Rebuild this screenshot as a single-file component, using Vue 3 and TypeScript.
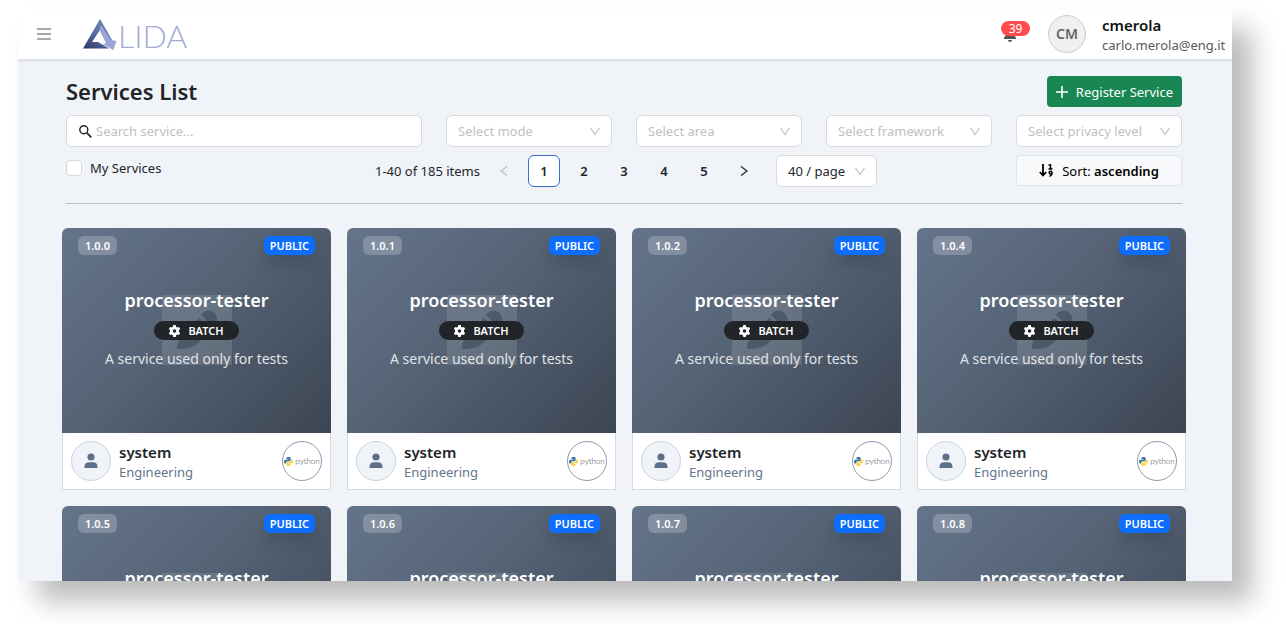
<script setup lang="ts">
import { ref } from 'vue'

interface Service {
  version: string
  name: string
  mode: string
  description: string
  owner: string
  organization: string
}

const services: Service[] = ['1.0.0', '1.0.1', '1.0.2', '1.0.4', '1.0.5', '1.0.6', '1.0.7', '1.0.8'].map((version) => ({
  version,
  name: 'processor-tester',
  mode: 'BATCH',
  description: 'A service used only for tests',
  owner: 'system',
  organization: 'Engineering',
}))

const filters = [
  { id: 'mode', label: 'Select mode' },
  { id: 'area', label: 'Select area' },
  { id: 'framework', label: 'Select framework' },
  { id: 'privacy', label: 'Select privacy level' },
]

const pages = [1, 2, 3, 4, 5]
const page = ref(1)
const search = ref('')
const mine = ref(false)
</script>

<template>
  <div class="desktop">
  <div class="window">
    <header class="topbar">
      <button class="menu" type="button" aria-label="Menu">
        <svg width="14" height="12" viewBox="0 0 14 12"><path d="M0 1h14M0 6h14M0 11h14" stroke="#8c8c8c" stroke-width="1.6" /></svg>
      </button>
      <a class="brand" href="#" aria-label="ALIDA">
        <svg width="34" height="31" viewBox="0 0 34 31">
          <defs>
            <linearGradient id="brand-dark" x1="0.7" y1="0" x2="0.1" y2="1">
              <stop offset="0" stop-color="#7383bd" />
              <stop offset="0.5" stop-color="#5969a4" />
              <stop offset="1" stop-color="#2f3b69" />
            </linearGradient>
          </defs>
          <path d="M17 0L29 21H24L17 11L9 23H15L26 29.5H0Z" fill="url(#brand-dark)" />
          <path d="M18 6L28 21L33.5 22L30.5 31L20 25.500L23 24L16.5 11Z" fill="#9aa6d6" />
        </svg>
        <span class="brand-text">LIDA</span>
      </a>
      <button class="bell" type="button" aria-label="Notifications">
        <svg width="14" height="16" viewBox="0 0 14 16"><path d="M7 0a1 1 0 0 1 1 1v.6A4.500 4.500 0 0 1 11.500 6v4L13 11.500V13H1v-1.500L2.500 10V6A4.500 4.500 0 0 1 6 1.600V1a1 1 0 0 1 1-1zM5 14h4a2 2 0 0 1-4 0z" fill="#555" /></svg>
        <span class="count">39</span>
      </button>
      <span class="initials">CM</span>
      <div class="account">
        <strong>cmerola</strong>
        <span>carlo.merola@eng.it</span>
      </div>
    </header>

    <main>
      <div class="heading">
        <h1>Services List</h1>
        <button class="register" type="button">
          <svg width="12" height="12" viewBox="0 0 12 12"><path d="M6 0v12M0 6h12" stroke="#fff" stroke-width="1.6" /></svg>
          Register Service
        </button>
      </div>

      <div class="filters">
        <label class="search">
          <svg width="13" height="13" viewBox="0 0 13 13" fill="none" stroke="#212529"><circle cx="4.800" cy="4.800" r="4" stroke-width="1.400" /><path d="M7.800 7.800L12.300 12.300" stroke-width="1.800" /></svg>
          <input v-model="search" type="text" placeholder="Search service..." aria-label="Search service" />
        </label>
        <label v-for="f in filters" :key="f.id" class="select">
          <select :aria-label="f.label"><option>{{ f.label }}</option></select>
          <svg width="12" height="9" viewBox="0 0 12 9"><path d="M1.500 1L6 7.500L10.500 1" fill="none" stroke="#bfbfbf" stroke-width="1.200" /></svg>
        </label>
      </div>

      <div class="controls">
        <label class="mine"><input v-model="mine" type="checkbox" />My Services</label>
        <nav class="pagination" aria-label="Pagination">
          <span class="total">1-40 of 185 items</span>
          <button type="button" disabled aria-label="Previous page">
            <svg width="8" height="12" viewBox="0 0 8 12"><path d="M7 1.500L1 6L7 10.500" fill="none" stroke="#bfbfbf" stroke-width="1.200" /></svg>
          </button>
          <button v-for="p in pages" :key="p" type="button" :class="{ current: p === page }" @click="page = p">{{ p }}</button>
          <button type="button" aria-label="Next page">
            <svg width="8" height="12" viewBox="0 0 8 12"><path d="M1 1.500L7 6L1 10.500" fill="none" stroke="#222" stroke-width="1.200" /></svg>
          </button>
          <label class="select size">
            <select aria-label="Page size"><option>40 / page</option></select>
            <svg width="12" height="9" viewBox="0 0 12 9"><path d="M1.500 1L6 7.500L10.500 1" fill="none" stroke="#bfbfbf" stroke-width="1.200" /></svg>
          </label>
        </nav>
        <button class="sort" type="button">
          <svg width="15" height="13" viewBox="0 0 15 13" fill="none" stroke="#000">
            <path d="M4 0V11M0.800 8L4 11.500L7.200 8" stroke-width="1.800" />
            <path d="M9.500 1.200L11.500 0.800V5M9.500 5H13.500" stroke-width="1.500" />
            <circle cx="11.500" cy="8.600" r="1.400" stroke-width="1.500" />
            <path d="M13 8.600C13 11 12 12 10.500 12.300" stroke-width="1.500" />
          </svg>
          <span>Sort: <b>ascending</b></span>
        </button>
      </div>
    </main>

    <section class="cards">
      <article v-for="s in services" :key="s.version" class="card">
        <div class="cover">
          <svg class="art" width="70" height="70" viewBox="0 0 70 70">
            <rect width="70" height="70" fill="#fff" fill-opacity="0.120" />
            <g fill="#333f50" fill-opacity="0.500">
              <path d="M15 54C15 46 18 41 24 37L37 23L51 36L38 46C33 53 24 54 15 54Z" />
              <path d="M39 20C43 14 50 14 54 20C57 26 55 31 53 34Z" />
            </g>
          </svg>
          <div class="badges">
            <span class="badge version">{{ s.version }}</span>
            <span class="badge public">PUBLIC</span>
          </div>
          <div class="summary">
            <h2>{{ s.name }}</h2>
            <span class="mode">
              <svg width="11" height="12" viewBox="0 0 11 12">
                <path fill="#fff" fill-rule="evenodd" d="M4.300 0h2.400l.4 1.700 1.300.7L10 1.900l1.100 2L9.900 5.200v1.600l1.200 1.300-1.100 2-1.600-.5-1.300.7-.4 1.700H4.300l-.4-1.700-1.300-.7-1.600.5-1.100-2 1.200-1.300V5.200L-.1 3.900l1.100-2 1.600.5 1.300-.7zM5.500 4.200a1.800 1.800 0 1 0 0 3.600 1.800 1.800 0 0 0 0-3.600z" />
              </svg>
              {{ s.mode }}
            </span>
            <p>{{ s.description }}</p>
          </div>
        </div>
        <footer>
          <span class="avatar">
            <svg width="14" height="16" viewBox="0 0 14 16" fill="#5c708a"><circle cx="7" cy="4" r="3.600" /><path d="M0.500 15V13.500C0.500 10.800 2.500 9.300 5 9.300H9C11.500 9.300 13.500 10.800 13.500 13.500V15Z" /></svg>
          </span>
          <div class="owner">
            <strong>{{ s.owner }}</strong>
            <span>{{ s.organization }}</span>
          </div>
          <span class="python">
            <svg width="9" height="9" viewBox="0 0 18 18">
              <path d="M9 0C5.500 0 5 1 5 3V4.500H9.500V5.500H3C1 5.500 0 7 0 9.500S1 13 3 13H4.500V11C4.500 9 6 8.300 7 8.300H11C12.500 8.300 13.300 7 13.300 6V3C13.300 1 12 0 9 0Z" fill="#3572a5" />
              <path d="M9 18C12.500 18 13 17 13 15V13.500H8.500V12.500H15C17 12.500 18 11 18 8.500S17 5 15 5H14.300V7C14.300 9 12.500 9.500 11.500 9.500H7.500C6 9.500 5 10.500 5 12V15C5 17 6 18 9 18Z" fill="#ffd43b" />
            </svg>
            python
          </span>
        </footer>
      </article>
    </section>
  </div>
  </div>
</template>

<style>
body {
  margin: 0;
  background: #fff;
}
</style>

<style scoped>
* {
  box-sizing: border-box;
}

.desktop {
  height: 100vh;
  padding: 9px 54px 43px 18px;
  overflow: hidden;
}

.window {
  height: 100%;
  overflow: hidden;
  background: #f0f3f8;
  box-shadow: 20px 20px 26px rgba(0, 0, 0, 0.27);
  color: #212529;
  font-family: "Noto Sans", "Open Sans", sans-serif;
  font-size: 13px;
  line-height: 20px;
}

button,
input,
select {
  font: inherit;
  color: inherit;
}

button {
  display: flex;
  align-items: center;
  justify-content: center;
  padding: 0;
  border: 0;
  background: none;
}

svg {
  flex: none;
  display: block;
}

.topbar {
  position: relative;
  display: flex;
  align-items: center;
  height: 50px;
  padding: 0 6px 0 18px;
  background: #fff;
  box-shadow: 0 1px 4px rgba(0, 21, 41, 0.16);
}

.menu {
  width: 16px;
  height: 16px;
}

.brand {
  display: flex;
  align-items: center;
  margin-left: 31px;
  gap: 1px;
  margin-right: auto;
  text-decoration: none;
}

.brand-text {
  padding-top: 4px;
  color: #a3abd2;
  font-family: Lato, sans-serif;
  font-size: 32px;
  font-weight: 300;
  line-height: 30px;
}

.bell {
  position: relative;
  margin-right: 31px;
}

.count {
  position: absolute;
  top: -5px;
  left: -2px;
  width: 29px;
  border-radius: 8px;
  background: #ff4d4f;
  color: #fff;
  font-size: 12px;
  line-height: 15px;
}

.initials {
  display: grid;
  place-items: center;
  width: 38px;
  height: 38px;
  border: 1px solid #ccc;
  border-radius: 50%;
  background: #f0f0f0;
  color: #666;
  font-size: 14px;
  font-weight: 600;
}

.account {
  display: flex;
  flex-direction: column;
  min-width: 124px;
  margin-left: 16px;
  padding-top: 2px;
}

.account strong {
  color: #111;
  font-size: 15px;
  font-weight: 600;
}

.account span {
  color: #595959;
}

main {
  margin: 17px 50px 0 48px;
  padding-bottom: 16px;
  border-bottom: 1px solid #b8bdc6;
}

.heading {
  display: flex;
  align-items: center;
  justify-content: space-between;
}

h1 {
  margin: 0;
  font-size: 22px;
  font-weight: 600;
  line-height: 31px;
}

.register {
  gap: 8px;
  height: 31px;
  padding: 0 9px;
  border-radius: 4px;
  background: #198754;
  color: #fff;
}

.filters {
  display: grid;
  grid-template-columns: repeat(6, 1fr);
  gap: 24px;
  margin-top: 8px;
}

.search,
.select {
  display: flex;
  align-items: center;
  height: 32px;
  border: 1px solid #d9d9d9;
  border-radius: 6px;
  background: #fff;
}

.search {
  grid-column: span 2;
  gap: 4px;
  padding: 0 12px;
}

.search input {
  flex: 1;
  min-width: 0;
  padding: 0;
  border: 0;
  outline: 0;
  background: none;
}

.search input::placeholder {
  color: #bfbfbf;
}

.select {
  position: relative;
  min-width: 0;
}

.select select {
  width: 100%;
  height: 30px;
  padding: 0 11px;
  border: 0;
  outline: 0;
  background: none;
  appearance: none;
  color: #bfbfbf;
}

.select svg {
  position: absolute;
  right: 10px;
  pointer-events: none;
}

.controls {
  display: grid;
  grid-template-columns: repeat(6, 1fr);
  column-gap: 24px;
  align-items: start;
  margin-top: 8px;
}

.mine {
  display: flex;
  align-items: center;
  gap: 8px;
  height: 26px;
}

.mine input {
  width: 16px;
  height: 16px;
  margin: 0;
  border: 1px solid #d9d9d9;
  border-radius: 4px;
  background: #fff;
  appearance: none;
}

.pagination {
  grid-column: span 4;
  display: flex;
  align-items: center;
  justify-content: center;
  gap: 8px;
}

.total {
  min-width: 109px;
  text-align: right;
}

.pagination button {
  width: 32px;
  height: 32px;
  border-radius: 6px;
  font-weight: 600;
}

.pagination .current {
  border: 1px solid #2f6fd6;
  background: #fff;
}

.size {
  width: 101px;
  margin-left: 8px;
}

.select.size select {
  color: #212529;
}

.sort {
  gap: 8px;
  height: 31px;
  border: 1px solid #dfe3e8;
  border-radius: 4px;
  background: #f8f9fa;
  color: #000;
}

.sort b {
  font-weight: 600;
}

.cards {
  display: grid;
  grid-template-columns: repeat(4, 1fr);
  gap: 16px;
  margin: 24px 46px 0 44px;
}

.card {
  overflow: hidden;
  border-radius: 6px 6px 0 0;
}

.cover {
  position: relative;
  height: 205px;
  padding: 8px 16px;
  background: linear-gradient(135deg, #64748b 0%, #556375 45%, #3c4553 100%);
}

.art {
  position: absolute;
  top: 67px;
  left: calc(50% - 35px);
}

.badges {
  position: relative;
  display: flex;
  justify-content: space-between;
}

.badge {
  padding: 0 7px;
  border-radius: 6px;
  color: #fff;
  font-size: 11px;
  font-weight: 600;
  line-height: 19px;
}

.version {
  background: rgba(255, 255, 255, 0.22);
}

.public {
  padding: 0 6px;
  background: #0d6efd;
  box-shadow: 0 8px 16px rgba(0, 0, 0, 0.15);
}

.summary {
  position: relative;
  display: flex;
  flex-direction: column;
  align-items: center;
  margin-top: 33px;
  color: #fff;
}

h2 {
  margin: 0;
  font-size: 18px;
  font-weight: 600;
  line-height: 24px;
}

.mode {
  display: flex;
  align-items: center;
  gap: 8px;
  margin: 9px 0;
  padding: 0 15px;
  border-radius: 10px;
  background: #212529;
  font-size: 11px;
  font-weight: 600;
  line-height: 19px;
}

p {
  margin: 0;
  color: #e0e4e9;
  font-size: 14px;
}

footer {
  display: flex;
  align-items: center;
  height: 57px;
  padding: 0 8px;
  border: 1px solid #d5dae2;
  border-top: 0;
  background: #fff;
}

.avatar,
.python {
  display: flex;
  align-items: center;
  justify-content: center;
  width: 40px;
  height: 40px;
  overflow: hidden;
  border: 1px solid #cbd3df;
  border-radius: 50%;
  background: #f0f3f8;
}

.owner {
  display: flex;
  flex: 1;
  flex-direction: column;
  margin-left: 8px;
  padding-top: 2px;
}

.owner strong {
  font-size: 15px;
  font-weight: 600;
}

.owner span {
  color: #64748b;
}

.python {
  gap: 2px;
  border-color: #8f9bb0;
  background: #fff;
  color: #444;
  font-family: Lato, sans-serif;
  font-size: 8px;
  font-weight: 300;
}
</style>
